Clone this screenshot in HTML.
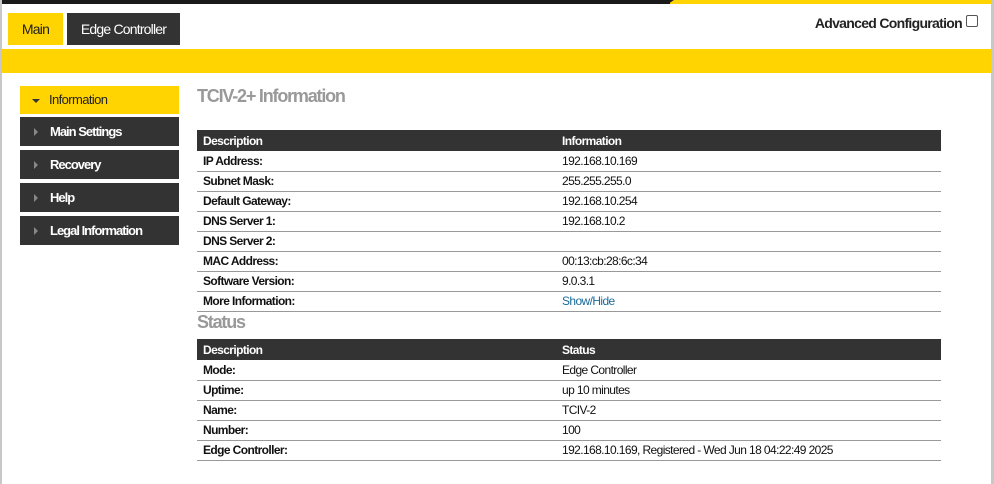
<!DOCTYPE html>
<html><head><style>
*{margin:0;padding:0;box-sizing:border-box}
body{width:994px;height:484px;overflow:hidden;background:#fff;font-family:"Liberation Sans",sans-serif;font-size:12px;color:#111;position:relative}
.abs{position:absolute}
.lb{left:0;top:0;width:2px;height:484px;background:#c8c8c8}
.rb{left:991px;top:0;width:3px;height:484px;background:#c8c8c8}
.tab{top:13px;height:32px;line-height:32px;font-size:14px;text-align:center;letter-spacing:-0.8px}
.nav{left:20px;width:159px;height:29px;line-height:29px;background:#333;color:#fff;font-size:13px;font-weight:bold;padding-left:30px;letter-spacing:-1px}
.nav:before{content:"";position:absolute;left:14px;top:11px;border-left:4px solid #888;border-top:4px solid transparent;border-bottom:4px solid transparent}
.nav.on{background:#ffd400;color:#222;font-weight:normal;padding-left:29px;letter-spacing:-0.6px}
.nav.on:before{left:12px;top:13px;border-top:4px solid #333;border-left:4px solid transparent;border-right:4px solid transparent;border-bottom:none}
h2{position:absolute;left:197px;font-size:18px;color:#999;font-weight:bold;letter-spacing:-1.2px}
table{position:absolute;left:197px;width:744px;border-collapse:collapse}
th{background:#333;color:#fff;text-align:left;height:21px;padding:0 6px;font-size:12px;letter-spacing:-0.6px}
td{height:20px;padding:0 6px;border-bottom:1px solid #999;font-size:12px;letter-spacing:-0.6px}
td:first-child{font-weight:bold}
th:first-child,td:first-child{width:359px}
a{color:#1a6a9a;text-decoration:none}
</style></head><body>
<div class="abs" style="left:0;top:0;width:680px;height:4px;background:#1a1a1a"></div>
<div class="abs" style="left:670px;top:0;width:321px;height:4px;background:#ffd400"></div>
<div class="abs" style="left:668px;top:0;width:0;height:0;border-top:4px solid #1a1a1a;border-right:6px solid transparent"></div>
<div class="abs lb"></div><div class="abs rb"></div>
<div class="abs tab" style="left:8px;width:55px;background:#ffd400;color:#222">Main</div>
<div class="abs tab" style="left:67px;width:113px;background:#333;color:#fff">Edge Controller</div>
<div class="abs" style="right:32px;top:15px;font-size:14px;font-weight:bold;color:#222;letter-spacing:-0.7px;white-space:nowrap">Advanced Configuration</div>
<div class="abs" style="left:966px;top:15px;width:12px;height:12px;border:1px solid #555;border-radius:2px"></div>
<div class="abs" style="left:2px;top:49px;width:989px;height:24px;background:#ffd400"></div>
<div class="abs nav on" style="top:86px;height:28px;line-height:28px">Information</div>
<div class="abs nav" style="top:117px">Main Settings</div>
<div class="abs nav" style="top:150px">Recovery</div>
<div class="abs nav" style="top:183px">Help</div>
<div class="abs nav" style="top:216px">Legal Information</div>
<h2 style="top:86px">TCIV-2+ Information</h2>
<table style="top:130px">
<tr><th>Description</th><th>Information</th></tr>
<tr><td>IP Address:</td><td>192.168.10.169</td></tr>
<tr><td>Subnet Mask:</td><td>255.255.255.0</td></tr>
<tr><td>Default Gateway:</td><td>192.168.10.254</td></tr>
<tr><td>DNS Server 1:</td><td>192.168.10.2</td></tr>
<tr><td>DNS Server 2:</td><td></td></tr>
<tr><td>MAC Address:</td><td>00:13:cb:28:6c:34</td></tr>
<tr><td>Software Version:</td><td>9.0.3.1</td></tr>
<tr><td>More Information:</td><td><a>Show/Hide</a></td></tr>
</table>
<h2 style="top:312px">Status</h2>
<table style="top:339px">
<tr><th>Description</th><th>Status</th></tr>
<tr><td>Mode:</td><td>Edge Controller</td></tr>
<tr><td>Uptime:</td><td>up 10 minutes</td></tr>
<tr><td>Name:</td><td>TCIV-2</td></tr>
<tr><td>Number:</td><td>100</td></tr>
<tr><td>Edge Controller:</td><td>192.168.10.169, Registered - Wed Jun 18 04:22:49 2025</td></tr>
</table>
</body></html>
